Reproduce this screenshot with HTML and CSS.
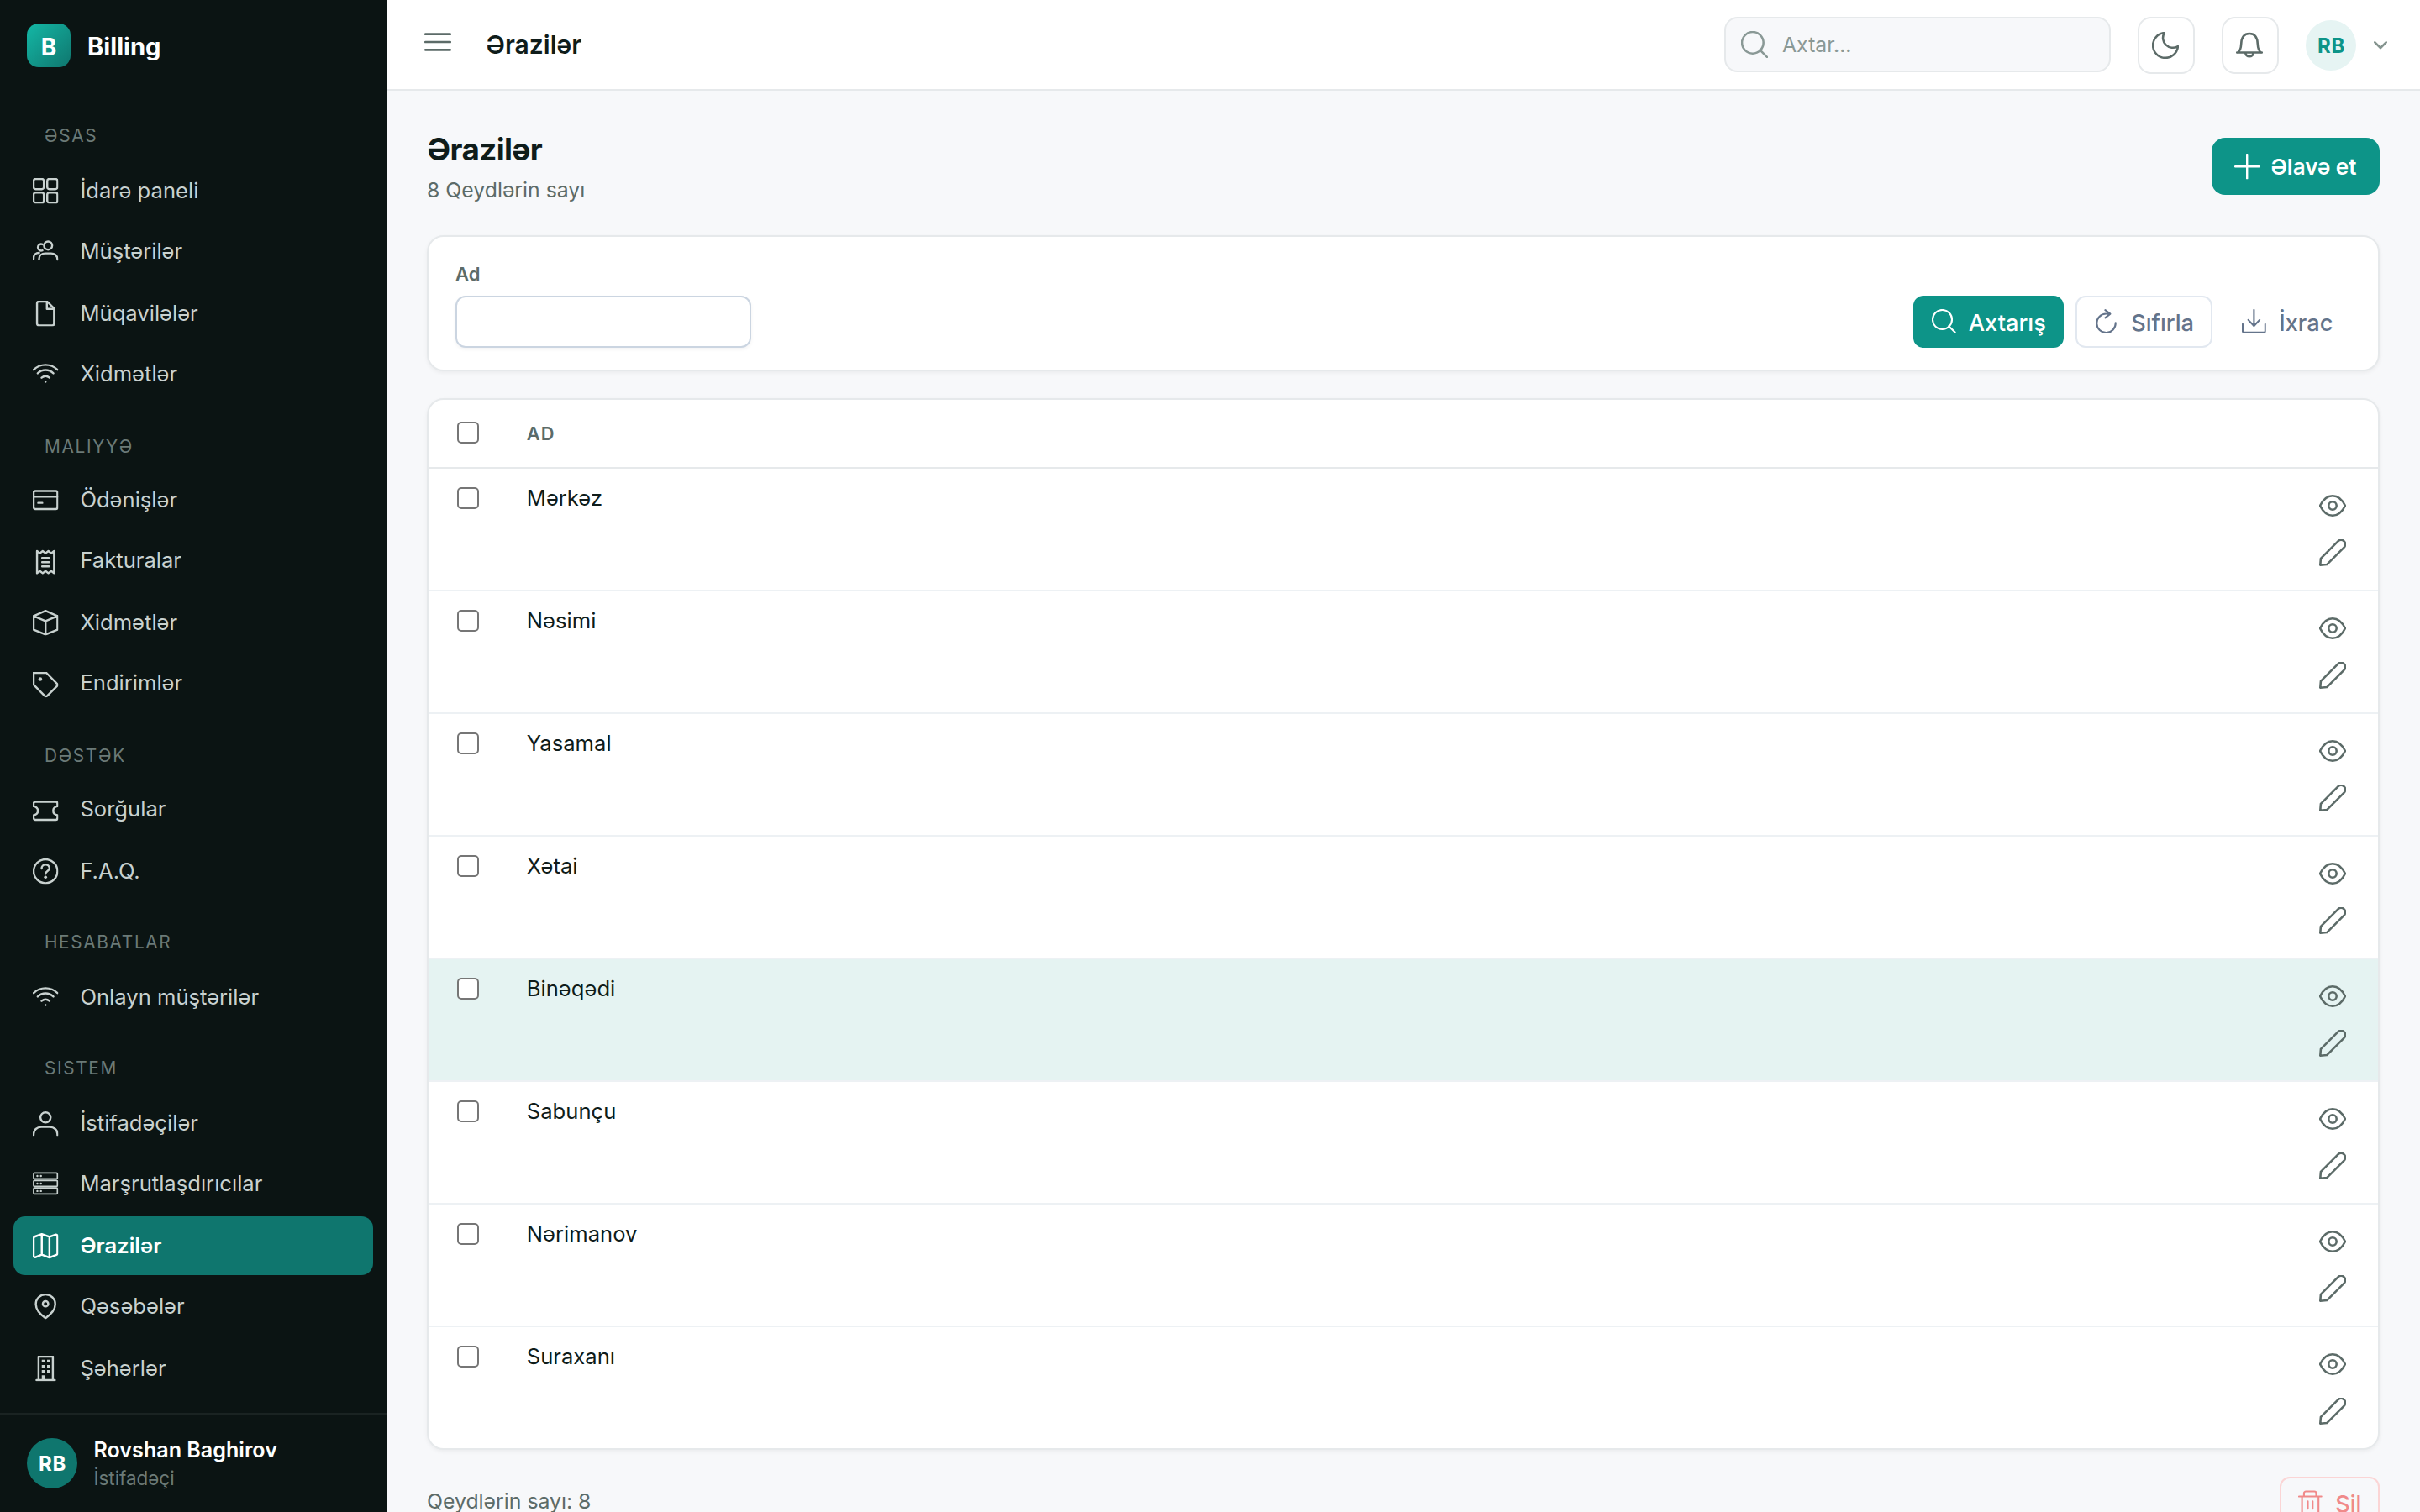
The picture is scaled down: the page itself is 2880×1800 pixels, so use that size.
FILE: index.html
```html
<!DOCTYPE html>
<html lang="az">
<head>
<meta charset="utf-8">
<title>Ərazilər</title>
<link rel="stylesheet" href="styles.css">
</head>
<body>
<svg class="sprite" aria-hidden="true">
  <symbol id="grid" viewBox="0 0 15 15"><rect x=".5" y=".5" width="6" height="6" rx="1.2"/><rect x="8.5" y=".5" width="6" height="6" rx="1.2"/><rect x=".5" y="8.5" width="6" height="6" rx="1.2"/><rect x="8.5" y="8.5" width="6" height="6" rx="1.2"/></symbol>
  <symbol id="users" viewBox="0 0 15 15"><circle cx="9" cy="4.1" r="2.4"/><path d="M3.7 12.4V12c0-2 1.6-3.3 3.6-3.3h3.5c2 0 3.7 1.3 3.7 3.3v.4M5.7 3.4A1.95 1.95 0 1 0 5.7 7M.5 12v-.8c0-1.7 1.3-2.8 3.2-2.8"/></symbol>
  <symbol id="file" viewBox="0 0 15 15"><path d="M2.5 13.5v-12a1 1 0 0 1 1-1h5l4 4v9a1 1 0 0 1-1 1h-8a1 1 0 0 1-1-1zM8.3.5v4.3h4.2"/></symbol>
  <symbol id="wifi" viewBox="0 0 15 15"><path d="M.5 5c4-3.8 10-3.8 14 0M2.9 7.1c2.7-2.5 6.5-2.5 9.2 0M5.2 9.7c1.4-1.2 3.2-1.2 4.6 0"/><circle class="solid" cx="7.5" cy="12.1" r=".6"/></symbol>
  <symbol id="card" viewBox="0 0 15 15"><rect x=".5" y="2.2" width="14" height="10.6" rx="1"/><path d="M.5 5.6h14M3.2 9.2h2.4"/></symbol>
  <symbol id="receipt" viewBox="0 0 15 15"><path d="M2.5 14V1l1.67 1.3L5.83 1 7.5 2.3 9.17 1l1.66 1.3L12.5 1v13l-1.67-1.3L9.17 14 7.5 12.7 5.83 14l-1.66-1.3zM5.5 5h4M5.5 7.5h4M5.5 10h4"/></symbol>
  <symbol id="box" viewBox="0 0 15 15"><path d="M7.5.6l7 3v8l-7 2.9-7-2.9v-8zM.5 3.6l7 3 7-3M7.5 6.6v7.9"/></symbol>
  <symbol id="tag" viewBox="0 0 15 15"><path d="M.5.5v7L7 14a1.1 1.1 0 0 0 1.5 0l5.7-5.7a1.1 1.1 0 0 0 0-1.5L8 .5z"/><circle class="solid" cx="4.4" cy="4.2" r="1.1"/></symbol>
  <symbol id="ticket" viewBox="0 0 15 15"><path d="M.5 3.2a1 1 0 0 1 1-1h12a1 1 0 0 1 1 1v1.7c-1.5.3-2.5 1.3-2.5 2.6s1 2.3 2.5 2.6v1.7a1 1 0 0 1-1 1h-12a1 1 0 0 1-1-1v-1.7c1.5-.3 2.5-1.3 2.5-2.6S2 5.2.5 4.9z"/></symbol>
  <symbol id="help" viewBox="0 0 15 15"><circle cx="7.5" cy="7.5" r="7"/><path d="M5.2 6a2.3 2.3 0 0 1 4.6-.2c0 1.6-2.3 1.7-2.3 3.2"/><circle class="solid" cx="7.5" cy="11" r=".9"/></symbol>
  <symbol id="user" viewBox="0 0 15 15"><circle cx="7.5" cy="4.1" r="3"/><path d="M.5 14.4v-.6c0-2.4 2-4.1 4.5-4.1h5c2.5 0 4.5 1.7 4.5 4.1v.6"/></symbol>
  <symbol id="server" viewBox="0 0 15 15"><g stroke-width=".9"><rect x=".5" y="1.2" width="14" height="3.5" rx=".6"/><rect x=".5" y="5.6" width="14" height="3.5" rx=".6"/><rect x=".5" y="10" width="14" height="3.5" rx=".6"/></g><g class="solid"><circle cx="2.7" cy="3" r=".6"/><circle cx="4.8" cy="3" r=".6"/><circle cx="2.7" cy="7.4" r=".6"/><circle cx="4.8" cy="7.4" r=".6"/><circle cx="2.7" cy="11.8" r=".6"/><circle cx="4.8" cy="11.8" r=".6"/></g></symbol>
  <symbol id="map" viewBox="0 0 15 15"><path d="M.5 3a.9.9 0 0 1 .6-.9L5.3.6l4.5 1.6L13.3.9c.6-.2 1.2.1 1.2.8v10.2a.9.9 0 0 1-.6.9l-4.1 1.6-4.5-1.8-3.6 1.5c-.6.2-1.2-.1-1.2-.8zM5.3.6v12M9.8 2.2v12"/></symbol>
  <symbol id="pin" viewBox="0 0 15 15"><path d="M7.5 14.4C5 12.7 1.8 9.7 1.8 6.2a5.7 5.7 0 0 1 11.4 0c0 3.5-3.2 6.5-5.7 8.2z"/><circle cx="7.5" cy="6" r="1.6"/></symbol>
  <symbol id="building" viewBox="0 0 15 15"><path d="M3.4 14.3V.5h8.4v13.8M2.2 14.3h10.8"/><path class="solid" d="M5.3 2.3h1.6v1.6H5.3zM8.4 2.3H10v1.6H8.4zM5.3 5.4h1.6V7H5.3zM8.4 5.4H10V7H8.4zM5.3 8.4h1.6V10H5.3zM8.4 8.4H10V10H8.4zM5.3 11.5h1.6v2.8H5.3z"/></symbol>
  <symbol id="search" viewBox="0 0 15 15"><path d="M14.5 14.5l-4-4M6.5 12.5a6 6 0 1 1 0-12 6 6 0 0 1 0 12z"/></symbol>
  <symbol id="moon" viewBox="0 0 15 15"><path d="M6.9.5A5.5 5.5 0 0 0 14.5 8 7 7 0 1 1 6.9.5z"/></symbol>
  <symbol id="bell" viewBox="0 0 15 15"><path d="M.5 11.5h14M1 11.5C2.2 10.7 2.8 9 2.9 6.8 3 3.1 4.3.9 7.5.9s4.5 2.2 4.6 5.9c.1 2.2.7 3.9 1.9 4.7M5.3 11.9a2.25 2.25 0 0 0 4.4 0"/></symbol>
  <symbol id="plus" viewBox="0 0 15 15"><path d="M7.5.5v14M.5 7.5h14"/></symbol>
  <symbol id="refresh" viewBox="0 0 15 15"><path d="M7 .6l3.1 2.3L7 5.4M9.6 2.9H7.5a5.85 5.85 0 1 0 5.9 5.6"/></symbol>
  <symbol id="download" viewBox="0 0 15 15"><path d="M7.5.5v10M4 6.7l3.5 3.7L11 6.7M.5 9.3v4.2a1 1 0 0 0 1 1h12a1 1 0 0 0 1-1V9.3"/></symbol>
  <symbol id="eye" viewBox="0 0 15 15"><path d="M.5 7.5C2.2 4 4.7 2 7.5 2s5.3 2 7 5.5c-1.7 3.5-4.2 5.5-7 5.5s-5.3-2-7-5.5z"/><circle cx="7.5" cy="7.5" r="2.2"/></symbol>
  <symbol id="pencil" viewBox="0 0 15 15"><path d="M.6 14.4l.3-3.7 9.6-9.6a2.4 2.4 0 0 1 3.4 3.4l-9.6 9.6z"/></symbol>
  <symbol id="trash" viewBox="0 0 15 15"><path d="M.5 3.9h14M3.6 3.9V2A1.2 1.2 0 0 1 4.8.8H10A1.2 1.2 0 0 1 11.2 2v1.900M2.400 3.900v9.600a1 1 0 0 0 1 1h8.200a1 1 0 0 0 1-1V3.900M6 6.900v4.700M9 6.900v4.700"/></symbol>
</svg>

<div class="app">
  <aside class="sidebar">
    <div class="brand"><span class="brand-logo">B</span><span class="brand-name">Billing</span></div>
    <nav class="nav">
      <section>
        <h2 class="nav-title">ƏSAS</h2>
        <ul class="nav-list">
          <li><a class="nav-item"><svg class="icon"><use href="#grid"/></svg><span>İdarə paneli</span></a></li>
          <li><a class="nav-item"><svg class="icon"><use href="#users"/></svg><span>Müştərilər</span></a></li>
          <li><a class="nav-item"><svg class="icon"><use href="#file"/></svg><span>Müqavilələr</span></a></li>
          <li><a class="nav-item"><svg class="icon"><use href="#wifi"/></svg><span>Xidmətlər</span></a></li>
        </ul>
      </section>
      <section>
        <h2 class="nav-title nav-title--low">MALIYYƏ</h2>
        <ul class="nav-list nav-list--alt">
          <li><a class="nav-item"><svg class="icon"><use href="#card"/></svg><span>Ödənişlər</span></a></li>
          <li><a class="nav-item nav-item--raised"><svg class="icon"><use href="#receipt"/></svg><span>Fakturalar</span></a></li>
          <li><a class="nav-item"><svg class="icon"><use href="#box"/></svg><span>Xidmətlər</span></a></li>
          <li><a class="nav-item nav-item--raised"><svg class="icon"><use href="#tag"/></svg><span>Endirimlər</span></a></li>
        </ul>
      </section>
      <section>
        <h2 class="nav-title">DƏSTƏK</h2>
        <ul class="nav-list">
          <li><a class="nav-item nav-item--raised"><svg class="icon"><use href="#ticket"/></svg><span>Sorğular</span></a></li>
          <li><a class="nav-item"><svg class="icon"><use href="#help"/></svg><span>F.A.Q.</span></a></li>
        </ul>
      </section>
      <section>
        <h2 class="nav-title">HESABATLAR</h2>
        <ul class="nav-list">
          <li><a class="nav-item"><svg class="icon"><use href="#wifi"/></svg><span>Onlayn müştərilər</span></a></li>
        </ul>
      </section>
      <section>
        <h2 class="nav-title">SISTEM</h2>
        <ul class="nav-list">
          <li><a class="nav-item"><svg class="icon"><use href="#user"/></svg><span>İstifadəçilər</span></a></li>
          <li><a class="nav-item"><svg class="icon"><use href="#server"/></svg><span>Marşrutlaşdırıcılar</span></a></li>
          <li><a class="nav-item nav-item--active"><svg class="icon"><use href="#map"/></svg><span>Ərazilər</span></a></li>
          <li><a class="nav-item"><svg class="icon"><use href="#pin"/></svg><span>Qəsəbələr</span></a></li>
          <li><a class="nav-item"><svg class="icon"><use href="#building"/></svg><span>Şəhərlər</span></a></li>
        </ul>
      </section>
    </nav>
    <div class="account">
      <span class="avatar avatar--solid">RB</span>
      <div class="account-text"><div class="account-name">Rovshan Baghirov</div><div class="account-role">İstifadəçi</div></div>
    </div>
  </aside>

  <div class="main">
    <header class="topbar">
      <svg class="menu" viewBox="0 0 32 22"><path d="M1.3 1.7h29.4M1.3 11h29.4M1.3 20.3h29.4"/></svg>
      <div class="topbar-title">Ərazilər</div>
      <div class="tools">
        <label class="search"><svg class="icon icon--lg"><use href="#search"/></svg><span>Axtar...</span></label>
        <button class="tool"><svg class="icon icon--lg"><use href="#moon"/></svg></button>
        <button class="tool"><svg class="icon icon--lg"><use href="#bell"/></svg></button>
        <div class="profile"><span class="avatar avatar--soft">RB</span><svg class="chevron" viewBox="0 0 16 10"><path d="M1.3 1.3L8 8l6.7-6.7"/></svg></div>
      </div>
    </header>

    <main class="content">
      <div class="page-head">
        <div class="page-title"><h1>Ərazilər</h1><p class="muted">8 Qeydlərin sayı</p></div>
        <button class="add"><svg class="icon"><use href="#plus"/></svg><span>Əlavə et</span></button>
      </div>

      <form class="card filter">
        <div class="field"><label class="field-label" for="ad">Ad</label><input class="field-input" id="ad" type="text"></div>
        <div class="actions">
          <button type="button" class="btn btn--primary"><svg class="icon"><use href="#search"/></svg><span>Axtarış</span></button>
          <button type="button" class="btn btn--outline"><svg class="icon"><use href="#refresh"/></svg><span>Sıfırla</span></button>
          <button type="button" class="btn"><svg class="icon"><use href="#download"/></svg><span>İxrac</span></button>
        </div>
      </form>

      <div class="card table">
        <div class="table-head"><span class="check"></span><span class="th">AD</span></div>
        <div class="row"><span class="check"></span><span class="name">Mərkəz</span><span class="row-tools"><svg class="icon icon--lg"><use href="#eye"/></svg><svg class="icon icon--lg"><use href="#pencil"/></svg></span></div>
        <div class="row"><span class="check"></span><span class="name">Nəsimi</span><span class="row-tools"><svg class="icon icon--lg"><use href="#eye"/></svg><svg class="icon icon--lg"><use href="#pencil"/></svg></span></div>
        <div class="row"><span class="check"></span><span class="name">Yasamal</span><span class="row-tools"><svg class="icon icon--lg"><use href="#eye"/></svg><svg class="icon icon--lg"><use href="#pencil"/></svg></span></div>
        <div class="row"><span class="check"></span><span class="name">Xətai</span><span class="row-tools"><svg class="icon icon--lg"><use href="#eye"/></svg><svg class="icon icon--lg"><use href="#pencil"/></svg></span></div>
        <div class="row row--hover"><span class="check"></span><span class="name">Binəqədi</span><span class="row-tools"><svg class="icon icon--lg"><use href="#eye"/></svg><svg class="icon icon--lg"><use href="#pencil"/></svg></span></div>
        <div class="row"><span class="check"></span><span class="name">Sabunçu</span><span class="row-tools"><svg class="icon icon--lg"><use href="#eye"/></svg><svg class="icon icon--lg"><use href="#pencil"/></svg></span></div>
        <div class="row"><span class="check"></span><span class="name">Nərimanov</span><span class="row-tools"><svg class="icon icon--lg"><use href="#eye"/></svg><svg class="icon icon--lg"><use href="#pencil"/></svg></span></div>
        <div class="row"><span class="check"></span><span class="name">Suraxanı</span><span class="row-tools"><svg class="icon icon--lg"><use href="#eye"/></svg><svg class="icon icon--lg"><use href="#pencil"/></svg></span></div>
      </div>

      <div class="table-foot">
        <span class="muted">Qeydlərin sayı: 8</span>
        <button class="btn btn--danger"><svg class="icon"><use href="#trash"/></svg><span>Sil</span></button>
      </div>
    </main>
  </div>
</div>
</body>
</html>
```
FILE: styles.css
```css
* { box-sizing: border-box; }
body, h1, h2, p, ul { margin: 0; padding: 0; }
ul { list-style: none; }
body {
  font-family: Inter, "Liberation Sans", sans-serif;
  color: #0f1c1a;
  background: #f7f8fa;
  overflow: hidden;
}
button, input { font: inherit; color: inherit; margin: 0; }
.sprite { display: none; }
.app { display: flex; height: 1800px; overflow: hidden; }

.icon {
  width: 30.4px;
  height: 30.4px;
  flex: none;
  overflow: visible;
  fill: none;
  stroke: currentColor;
  stroke-width: 1.2;
  stroke-linecap: round;
  stroke-linejoin: round;
}
.icon--lg { width: 32px; height: 32px; }
.solid { fill: currentColor; stroke: none; }

/* Sidebar */
.sidebar {
  width: 460px;
  flex: none;
  display: flex;
  flex-direction: column;
  background: #0b1413;
}
.brand { display: flex; align-items: center; gap: 20px; height: 140px; padding: 0 32px 32px; }
.brand-logo {
  width: 52px;
  height: 52px;
  border-radius: 14px;
  display: grid;
  place-items: center;
  padding-top: 3px;
  background: linear-gradient(135deg, #14b8a6, #0f766e);
  color: #fff;
  font-size: 28px;
  font-weight: 700;
}
.brand-name { color: #fff; font-size: 29.2px; font-weight: 700; padding-top: 2px; }
.nav { flex: 1; display: flex; flex-direction: column; gap: 28px; padding: 0 16px; }
.nav-title {
  height: 40px;
  line-height: 43px;
  margin-bottom: 12px;
  padding-left: 37px;
  color: #6b7a77;
  font-size: 20.8px;
  font-weight: 400;
  letter-spacing: .08em;
}
.nav-title--low { line-height: 47px; }
.nav-list li:nth-child(even) { margin: 2px 0 4px; }
.nav-list li:last-child { margin-bottom: 0; }
.nav-list--alt li:nth-child(even) { margin: 4px 0 2px; }
.nav-list--alt li:last-child { margin-bottom: 0; }
.nav-item {
  display: flex;
  align-items: center;
  gap: 25.6px;
  height: 70px;
  padding-left: 23.4px;
  border-radius: 14px;
  color: #c8d1cf;
  font-size: 25.6px;
  line-height: 34px;
}
.nav-item--raised span { padding-bottom: 4px; }
.nav-item--active { background: #0f766e; color: #fff; font-weight: 600; }
.account {
  display: flex;
  align-items: center;
  gap: 19.5px;
  height: 118px;
  padding: 0 32px;
  border-top: 2px solid #1a2322;
}
.account-text { line-height: 34px; padding-top: 2px; }
.account-name { color: #fff; font-size: 25.1px; font-weight: 600; }
.account-role { color: #6b7a77; font-size: 22.4px; }
.avatar {
  width: 60px;
  height: 60px;
  flex: none;
  border-radius: 50%;
  display: grid;
  place-items: center;
  padding-left: 1px;
  font-size: 24px;
  font-weight: 700;
  letter-spacing: .8px;
}
.avatar--solid { background: #0f766e; color: #fff; }
.avatar--soft { background: #e6f4f3; color: #0d9488; }

/* Top bar */
.main { flex: 1; min-width: 0; }
.topbar {
  display: flex;
  align-items: center;
  height: 108px;
  padding: 0 39px 0 45px;
  background: #fff;
  border-bottom: 2px solid #e6e9eb;
}
.menu { width: 32px; height: 22px; margin: 0 41.5px 6px 0; fill: none; stroke: #5c6b68; stroke-width: 2.7; stroke-linecap: round; }
.topbar-title { font-size: 30px; font-weight: 600; }
.tools { display: flex; align-items: flex-start; gap: 32px; margin: 2px 0 0 auto; }
.search {
  display: flex;
  align-items: center;
  gap: 17px;
  width: 460px;
  height: 66px;
  padding-left: 18px;
  border: 2px solid #e6e9eb;
  border-radius: 16px;
  background: #f7f8fa;
  color: #8a9996;
  font-size: 24.8px;
}
.tool {
  width: 68px;
  height: 68px;
  padding: 0 2px 0 0;
  display: grid;
  place-items: center;
  border: 2px solid #e6e9eb;
  border-radius: 16px;
  background: #fff;
  color: #5c6b68;
}
.profile { display: flex; align-items: center; gap: 21px; height: 68px; }
.chevron { width: 16px; height: 10px; fill: none; stroke: #85948f; stroke-width: 2.6; stroke-linecap: round; stroke-linejoin: round; }

/* Content */
.content { padding: 48px 48px 0; }
.muted { color: #5c6b68; font-size: 24.8px; line-height: 36px; }
.page-head { display: flex; align-items: center; justify-content: space-between; height: 84px; margin-bottom: 40px; }
.page-title { padding-bottom: 4px; }
h1 { font-size: 36.8px; font-weight: 700; line-height: 60px; letter-spacing: -.6px; padding-left: .5px; }
.page-head .muted { margin-top: -12px; padding-top: 12px; }
.add {
  display: flex;
  align-items: center;
  gap: 13px;
  width: 200px;
  height: 68px;
  padding: 0 27px;
  border: 0;
  border-radius: 16px;
  background: #0d9488;
  color: #fff;
  font-size: 26px;
  font-weight: 600;
  white-space: nowrap;
}
.add span { padding-top: 1px; }
.card {
  border: 2px solid #e6e9eb;
  border-radius: 20px;
  background: #fff;
  box-shadow: 0 2px 5px rgba(15, 28, 26, .05);
}
.filter { display: flex; align-items: flex-end; justify-content: space-between; height: 162px; padding: 26px 32px; }
.field { display: flex; flex-direction: column; gap: 8px; }
.field-label { color: #5c6b68; font-size: 22px; font-weight: 600; line-height: 36px; }
.field-input {
  width: 352px;
  height: 62px;
  border: 2px solid #cbd5e1;
  border-radius: 12px;
  background: #fff;
  box-shadow: 0 2px 4px rgba(15, 23, 42, .05);
}
.actions { display: flex; gap: 14px; }
.btn {
  display: flex;
  align-items: center;
  gap: 15.3px;
  height: 62px;
  padding: 0 19.6px;
  border: 2px solid transparent;
  border-radius: 12px;
  background: none;
  color: #64748b;
  font-size: 27.2px;
  font-weight: 500;
  white-space: nowrap;
}
.btn .icon { width: 28.8px; height: 28.8px; margin-bottom: 2px; stroke-width: 1.1; }
.btn span { padding-top: 2px; }
.btn--primary { background: #0d9488; border-color: #0d9488; color: #fff; }
.btn--outline { background: #fff; border-color: #e2e8f0; }
.btn--danger { border-color: #fbd5d5; color: #f08a8a; }

/* Table */
.table { margin-top: 32px; overflow: hidden; }
.table-head, .row { display: flex; padding: 0 38px 0 34px; }
.table-head { align-items: center; height: 82px; border-bottom: 2px solid #e6e9eb; }
.check {
  width: 26px;
  height: 26px;
  flex: none;
  margin-right: 56.8px;
  border: 2px solid #767676;
  border-radius: 5px;
  background: #fff;
}
.table-head .check { margin-bottom: 2px; }
.th { color: #5c6b68; font-size: 21.8px; font-weight: 600; letter-spacing: 1.1px; }
.row { height: 146px; border-bottom: 2px solid #edf1f4; }
.row:last-child { height: 144px; border-bottom: 0; }
.row--hover { background: #e5f3f2; }
.row .check { margin-top: 22px; }
.name { font-size: 25.6px; line-height: 36px; margin-top: 17px; }
.row-tools { display: flex; flex-direction: column; gap: 24px; margin: 28px 0 0 auto; color: #5c6b68; }
.table-foot { display: flex; align-items: center; justify-content: space-between; margin-top: 32px; }
.table-foot .muted { padding-bottom: 4px; }
```
